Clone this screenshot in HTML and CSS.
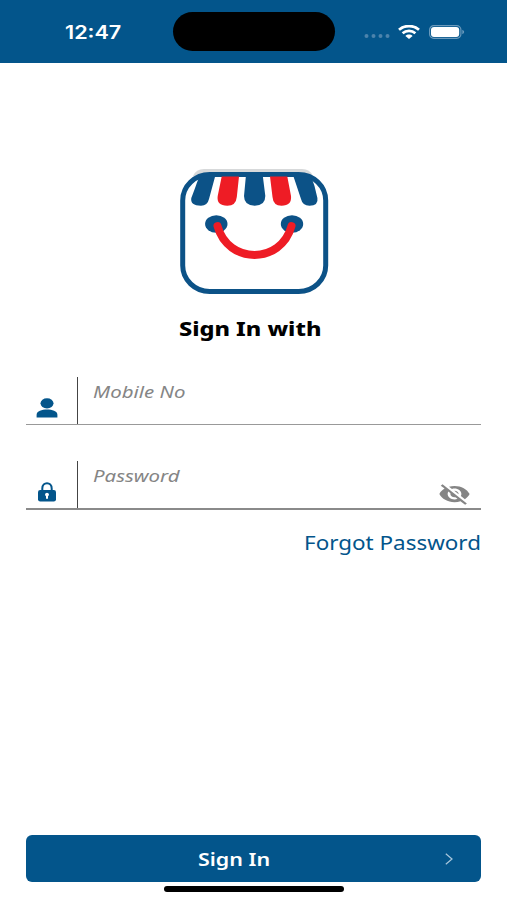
FILE: index.html
```
<!DOCTYPE html>
<html lang="en">

<head>
    <meta charset="UTF-8">
    <meta name="viewport" content="width=device-width, initial-scale=1.0">
    <title>Sign In</title>
    <link rel="stylesheet" href="styles.css">
</head>

<body>
    <!-- Status bar -->
    <header class="status-bar">
        <div class="time"><span>12:47</span></div>
        <div class="island"></div>
        <div class="status-icons">
            <svg class="signal" viewBox="0 0 26 6">
                <circle cx="2.5" cy="3" r="2" />
                <circle cx="9.5" cy="3" r="2" />
                <circle cx="16.5" cy="3" r="2" />
                <circle cx="23.5" cy="3" r="2" />
            </svg>
            <svg class="wifi" viewBox="0 0 22 14" preserveAspectRatio="none">
                <path d="M1 4.8C6.5-.2 15.5-.2 21 4.8" />
                <path d="M4.6 8.3c3.6-3.2 9.2-3.2 12.8 0" />
                <path class="wifi-dot" d="M7.4 11c2-1.900 5.200-1.900 7.200 0L11 14z" />
            </svg>
            <svg class="battery" viewBox="0 0 36 14">
                <rect class="battery-case" x=".6" y=".6" width="31.3" height="12.8" rx="4.2" />
                <rect class="battery-level" x="2" y="2" width="28.2" height="10" rx="3" />
                <path class="battery-cap" d="M33.3 4.8c2.4.8 2.4 3.6 0 4.4z" />
            </svg>
        </div>
    </header>

    <main class="container">
        <svg class="logo" viewBox="0 0 150 128">
            <path class="logo-shade" d="M14 8Q17 1 25 1h98q8 0 11 7z" />
            <rect class="logo-frame" x="3.7" y="6.5" width="143" height="117" rx="27" ry="26" />
            <!-- Awning -->
            <path class="blue" d="M21 7h15.5L30 31q-1.500 6.700-8 6.700-11 0-9.700-7.700 3.500-9 5.500-15z" />
            <path class="red" d="M42.7 8.400H60L57.800 29q-.8 8.700-9.500 8.700-11 0-9.600-9.700z" />
            <path class="blue" d="M67 7h16.700l2.600 21q0 9.700-10.600 9.700T65 28z" />
            <path class="red" d="M91 8.400h17.300l3.700 19.600q1 9.700-9.500 9.700-8.300 0-9-8.700z" />
            <path class="blue" d="M114 7h16.500q3.500 5 5 11l2.900 12q1.300 7.700-7.900 7.700-7 0-8.500-6.700z" />
            <!-- Smile -->
            <ellipse class="blue" cx="37.3" cy="56" rx="11.2" ry="8.7" />
            <ellipse class="blue" cx="113" cy="56" rx="11.2" ry="8.7" />
            <path class="logo-smile" d="M38.5 58C49 96.500 102 96.500 112.500 58" />
        </svg>

        <h1><span>Sign In with</span></h1>

        <form class="form">
            <div class="field">
                <div class="field-icon">
                    <svg class="user-icon" viewBox="0 0 22 20">
                        <ellipse cx="11" cy="5.3" rx="6.5" ry="5.1" />
                        <path d="M.6 19.600v-2.800c0-3.600 5.400-5.200 10.400-5.200s10.400 1.600 10.400 5.200v2.800z" />
                    </svg>
                </div>
                <label class="placeholder"><span>Mobile No</span></label>
            </div>

            <div class="field field-dark">
                <div class="field-icon">
                    <svg class="lock-icon" viewBox="0 0 18 20">
                        <path class="shackle" d="M4.300 9V6.500c0-7 9.400-7 9.400 0V9" />
                        <rect x="0" y="8" width="18" height="11.5" rx="2.2" />
                        <path class="keyhole" d="M9 10.700a2.100 1.900 0 0 1 1 3.500v2.500H8v-2.500a2.100 1.900 0 0 1 1-3.500z" />
                    </svg>
                </div>
                <label class="placeholder"><span>Password</span></label>
                <svg class="eye-icon" viewBox="0 0 24 24" preserveAspectRatio="none">
                    <path d="M12 7c2.760 0 5 2.240 5 5 0 .65-.13 1.260-.36 1.830l2.920 2.920c1.510-1.260 2.700-2.890 3.430-4.750-1.730-4.390-6-7.500-11-7.500-1.400 0-2.740.25-3.980.7l2.160 2.160C10.740 7.130 11.350 7 12 7zM2 4.270l2.280 2.280.46.46C3.080 8.300 1.780 10.020 1 12c1.730 4.390 6 7.500 11 7.500 1.550 0 3.030-.3 4.380-.84l.42.42L19.730 22 21 20.730 3.270 3 2 4.270zM7.530 9.800l1.550 1.550c-.05.21-.08.43-.08.65 0 1.660 1.340 3 3 3 .22 0 .44-.03.65-.08l1.550 1.550c-.67.33-1.410.53-2.200.53-2.760 0-5-2.240-5-5 0-.79.2-1.530.53-2.200zm4.310-.78l3.150 3.150.02-.16c0-1.660-1.340-3-3-3l-.17.01z" />
                </svg>
            </div>

            <a class="forgot" href="#"><span>Forgot Password</span></a>

            <button class="sign-in-btn" type="button">
                <span class="btn-text">Sign In</span>
                <svg class="arrow" viewBox="0 0 8 12">
                    <path d="M.8.8L7 6 .8 11.2" />
                </svg>
            </button>
        </form>
    </main>

    <div class="home-indicator"></div>
</body>

</html>
```
FILE: styles.css
```
* {
    box-sizing: border-box;
}

body {
    font-family: "Noto Sans", sans-serif;
    margin: 0;
    height: 900px;
    display: flex;
    flex-direction: column;
    background-color: #fff;
    overflow: hidden;
}

svg {
    display: block;
    flex: none;
}

/* The lettering is wide, so text is stretched sideways */
h1 span,
.time span,
.placeholder span,
.forgot span,
.btn-text {
    display: inline-block;
    white-space: nowrap;
    transform-origin: left center;
}

.status-bar {
    display: grid;
    grid-template-columns: 173px 162px 1fr;
    align-items: center;
    height: 63px;
    background-color: #03558b;
    color: #fff;
}

.time {
    padding: 2px 0 0 65px;
    font-family: Inter, sans-serif;
    font-size: 18px;
    font-weight: 600;
    line-height: 22px;
}

.time span {
    transform: scaleX(1.2);
}

.island {
    height: 39px;
    border-radius: 20px;
    background-color: #000;
}

.status-icons {
    display: flex;
    align-items: center;
    padding-left: 29px;
}

.signal {
    width: 26px;
    height: 6px;
    margin-top: 9px;
    fill: #4c83ac;
}

.wifi {
    width: 22px;
    height: 14px;
    margin-left: 8px;
    fill: none;
    stroke: #fff;
    stroke-width: 2.7;
}

.wifi-dot {
    fill: #fff;
    stroke: none;
}

.battery {
    width: 36px;
    height: 14px;
    margin-left: 9px;
}

.battery-case {
    fill: none;
    stroke: #6b9abc;
    stroke-width: 1.2;
}

.battery-level {
    fill: #fff;
}

.battery-cap {
    fill: #6b9abc;
}

.container {
    flex: 1;
    display: flex;
    flex-direction: column;
    padding: 105px 26px 18px;
}

.logo {
    width: 150px;
    height: 128px;
    margin-left: 153px;
}

.logo-shade {
    fill: #d7d9da;
}

.blue {
    fill: #0c5287;
}

.red {
    fill: #ee1c25;
}

.logo-frame {
    fill: #fff;
    stroke: #0c5287;
    stroke-width: 5;
}

.logo-smile {
    fill: none;
    stroke: #ee1c25;
    stroke-width: 8;
    stroke-linecap: round;
}

h1 {
    margin: 19px 0 0 153px;
    font-size: 20px;
    line-height: 28px;
    font-weight: 800;
    color: #000;
}

h1 span {
    transform: scaleX(1.175);
}

.form {
    flex: 1;
    display: flex;
    flex-direction: column;
    margin-top: 34px;
}

.field {
    display: flex;
    height: 48px;
    margin-bottom: 36px;
    border-bottom: 1px solid #999;
}

.field-dark {
    height: 49px;
    border-bottom: 2px solid #8a8a8a;
}

.field-icon {
    display: flex;
    justify-content: center;
    width: 52px;
    padding: 21px 9px 0 0;
    border-right: 1px solid #444;
}

.user-icon {
    width: 22px;
    height: 20px;
    fill: #03558b;
}

.lock-icon {
    width: 18px;
    height: 20px;
    fill: #03558b;
}

.shackle {
    fill: none;
    stroke: #03558b;
    stroke-width: 2;
}

.keyhole {
    fill: #fff;
}

.placeholder {
    flex: 1;
    padding: 4px 0 0 15px;
    font-size: 17px;
    line-height: 22px;
    font-style: italic;
    color: #858585;
}

.placeholder span {
    transform: scaleX(1.2);
}

.eye-icon {
    width: 33px;
    height: 26px;
    margin: 20px 10px 0 0;
    fill: #858585;
}

.forgot {
    align-self: flex-end;
    margin-top: -17px;
    font-size: 19px;
    line-height: 28px;
    color: #03558b;
    text-decoration: none;
}

.forgot span {
    transform: scaleX(1.18);
    transform-origin: right center;
}

.sign-in-btn {
    display: flex;
    align-items: center;
    justify-content: space-between;
    height: 47px;
    margin-top: auto;
    padding: 0 28px 0 172px;
    border: none;
    border-radius: 6px;
    background-color: #03558b;
    color: #fff;
    font-family: inherit;
    font-size: 18px;
    font-weight: 600;
    cursor: pointer;
}

.btn-text {
    transform: scaleX(1.19);
}

.arrow {
    width: 8px;
    height: 12px;
    fill: none;
    stroke: #a9c7dc;
    stroke-width: 1.2;
}

/* Sits over the bottom edge of the screen */
.home-indicator {
    position: absolute;
    left: 164px;
    bottom: 8px;
    width: 180px;
    height: 6px;
    border-radius: 3px;
    background-color: #000;
}
```
